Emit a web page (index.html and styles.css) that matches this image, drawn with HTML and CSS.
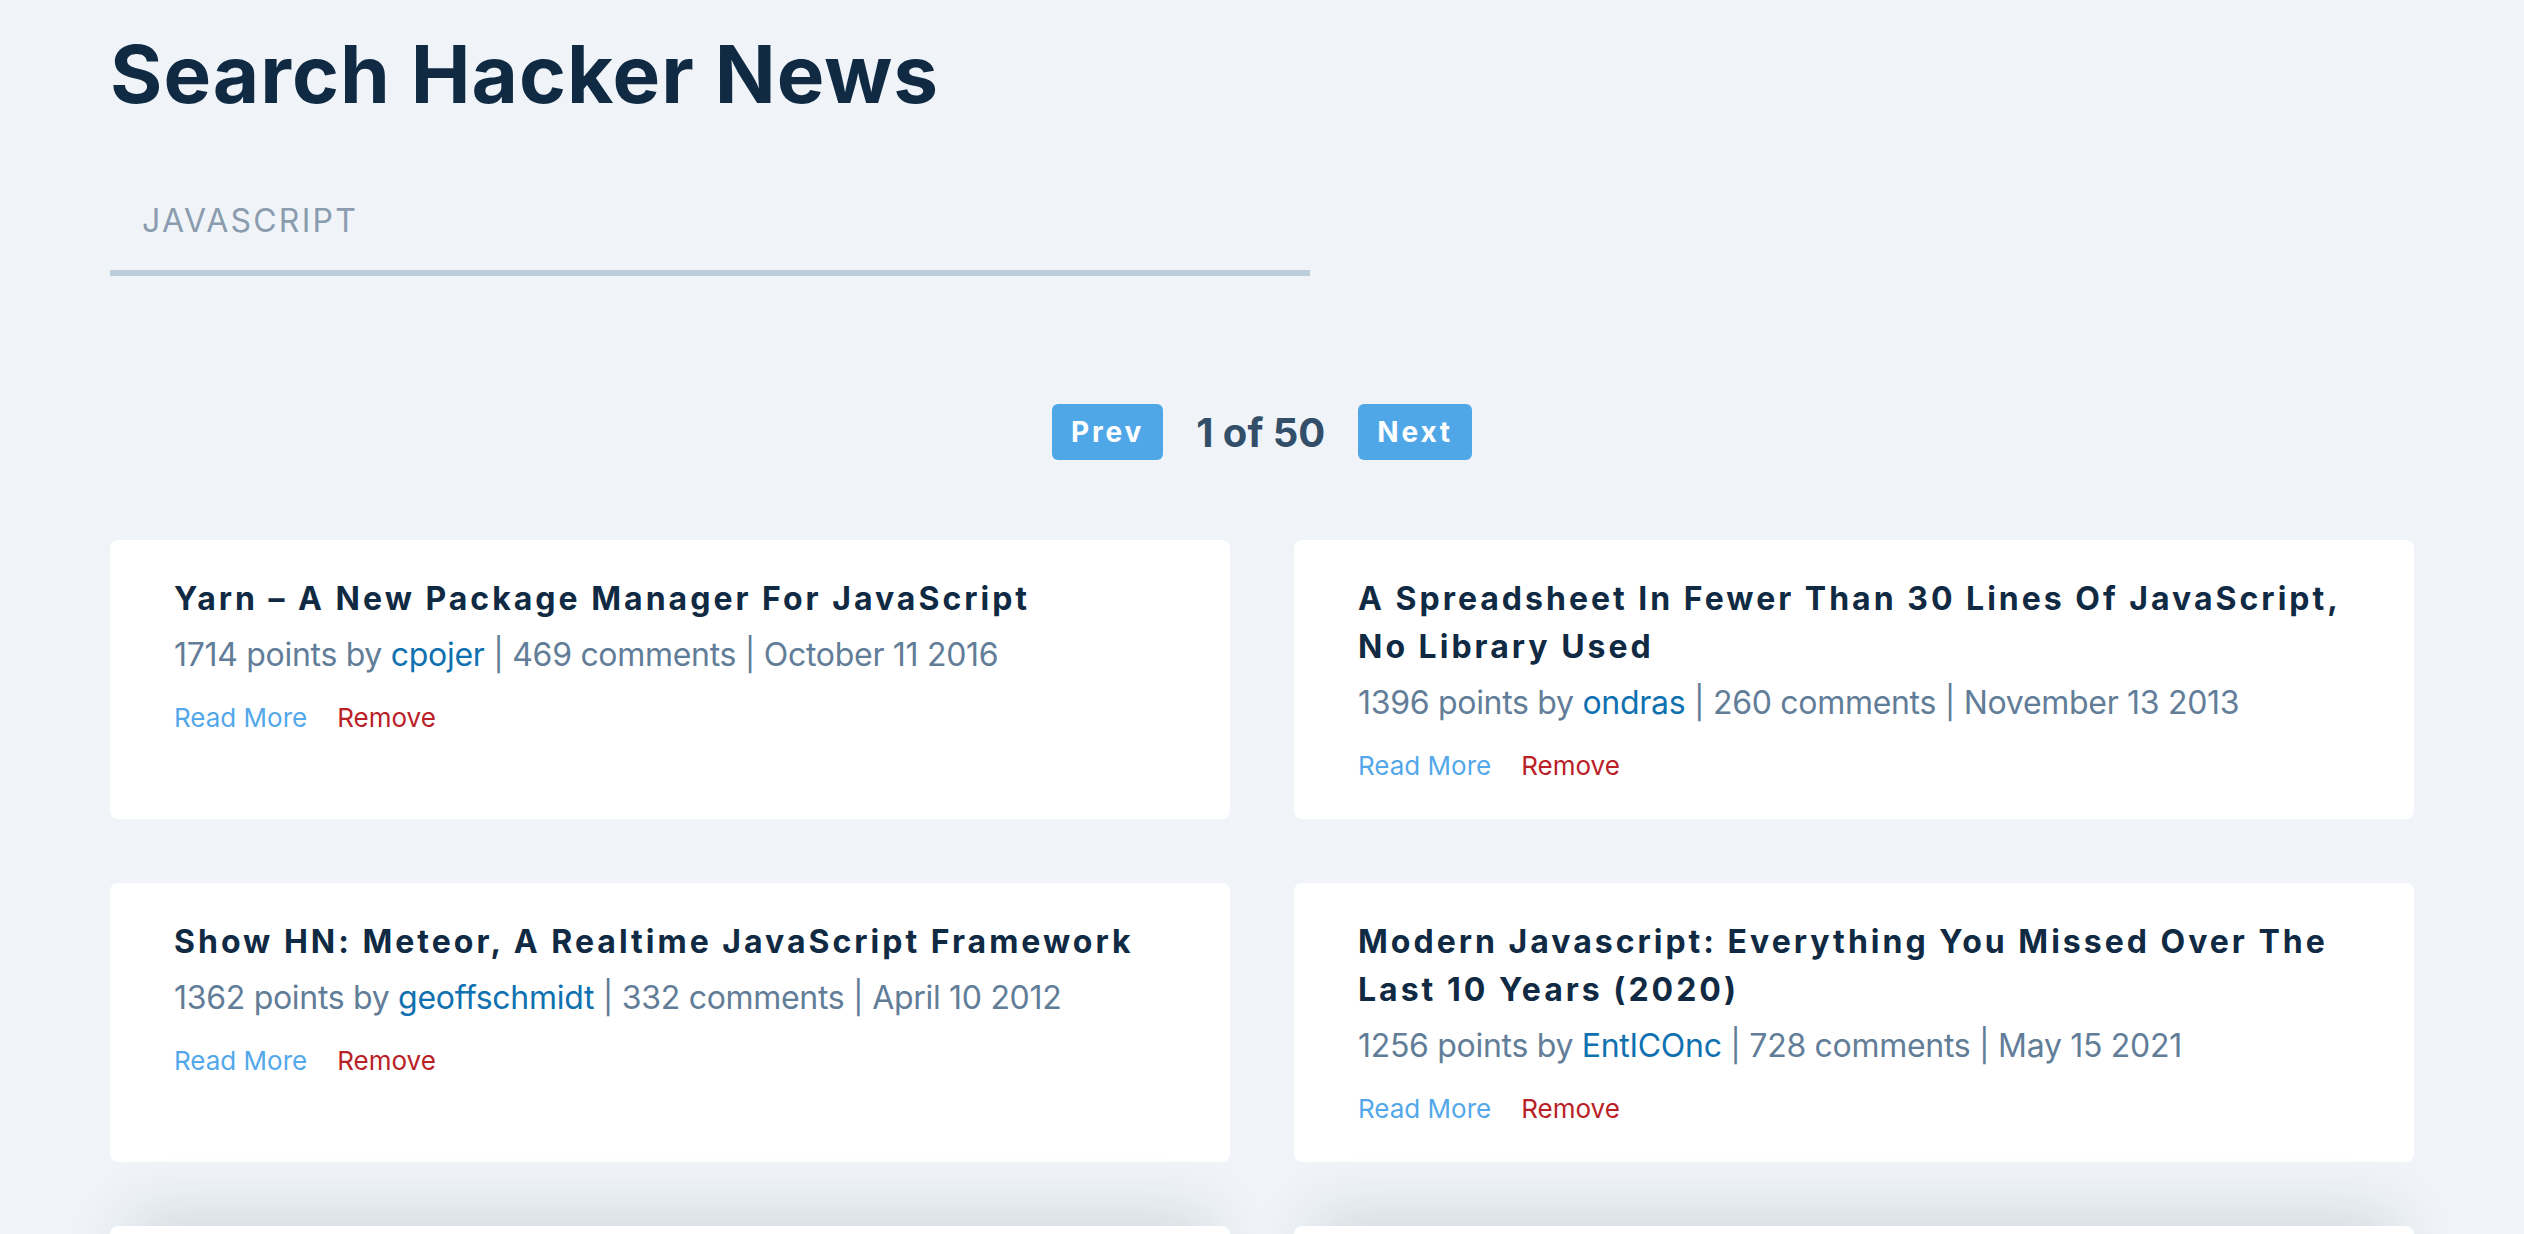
FILE: index.html
```html
<!DOCTYPE html>
<html lang="en">
<head>
<meta charset="utf-8">
<title>Search Hacker News</title>
<link rel="stylesheet" href="styles.css">
</head>
<body>
<main class="container">
  <h1 class="title">Search Hacker News</h1>
  <form class="search-form">
    <input class="search-input" type="text" value="javascript">
  </form>
  <div class="pager">
    <button class="pager-btn" type="button">Prev</button>
    <span class="pager-count">1 of 50</span>
    <button class="pager-btn" type="button">Next</button>
  </div>
  <section class="stories">
    <article class="story">
      <h2 class="story-title">Yarn – A New Package Manager For JavaScript</h2>
      <p class="story-meta">1714 points by <a class="author" href="#">cpojer</a> | 469 comments | October 11 2016</p>
      <div class="story-actions"><a class="read-more" href="#">Read More</a><a class="remove" href="#">Remove</a></div>
    </article>
    <article class="story">
      <h2 class="story-title">A Spreadsheet In Fewer Than 30 Lines Of JavaScript, No Library Used</h2>
      <p class="story-meta">1396 points by <a class="author" href="#">ondras</a> | 260 comments | November 13 2013</p>
      <div class="story-actions"><a class="read-more" href="#">Read More</a><a class="remove" href="#">Remove</a></div>
    </article>
    <article class="story">
      <h2 class="story-title">Show HN: Meteor, A Realtime JavaScript Framework</h2>
      <p class="story-meta">1362 points by <a class="author" href="#">geoffschmidt</a> | 332 comments | April 10 2012</p>
      <div class="story-actions"><a class="read-more" href="#">Read More</a><a class="remove" href="#">Remove</a></div>
    </article>
    <article class="story">
      <h2 class="story-title">Modern Javascript: Everything You Missed Over The Last 10 Years (2020)</h2>
      <p class="story-meta">1256 points by <a class="author" href="#">EntICOnc</a> | 728 comments | May 15 2021</p>
      <div class="story-actions"><a class="read-more" href="#">Read More</a><a class="remove" href="#">Remove</a></div>
    </article>
    <article class="story story-raised">
      <h2 class="story-title">Show HN: JavaScript Frameworks Compared</h2>
      <p class="story-meta">1120 points by <a class="author" href="#">someone</a> | 410 comments | March 2 2015</p>
      <div class="story-actions"><a class="read-more" href="#">Read More</a><a class="remove" href="#">Remove</a></div>
    </article>
    <article class="story story-raised">
      <h2 class="story-title">JavaScript: The Good Parts</h2>
      <p class="story-meta">1098 points by <a class="author" href="#">someone</a> | 388 comments | June 8 2014</p>
      <div class="story-actions"><a class="read-more" href="#">Read More</a><a class="remove" href="#">Remove</a></div>
    </article>
  </section>
</main>
</body>
</html>
```

FILE: styles.css
```css
* { box-sizing: border-box; }

html, body {
  margin: 0;
  padding: 0;
}

body {
  background: #f0f4f8;
  font-family: Inter, "Noto Sans", "Liberation Sans", sans-serif;
  color: #102a43;
}

.container {
  width: 2304px;
  margin: 0 auto;
  padding-bottom: 80px;
}

.title {
  margin: 26px 0 0;
  font-size: 80px;
  line-height: 96px;
  font-weight: 700;
  letter-spacing: 1px;
  color: #102a43;
}

.search-form {
  margin: 49px 0 0;
}

.search-input {
  display: block;
  width: 1200px;
  height: 105px;
  padding: 0 32px;
  border: none;
  border-bottom: 6px solid #bccddc;
  background: transparent;
  font-family: inherit;
  font-size: 32px;
  letter-spacing: 0.07em;
  text-transform: uppercase;
  color: #8a9cae;
  outline: none;
}

.pager {
  display: flex;
  justify-content: center;
  align-items: center;
  gap: 33px;
  margin: 128px 0 80px;
}

.pager-btn {
  height: 56px;
  padding: 0 19px;
  border: none;
  border-radius: 6px;
  background: #50a7e7;
  color: #ffffff;
  font-family: inherit;
  font-size: 28px;
  font-weight: 700;
  letter-spacing: 0.1em;
}

.pager-count {
  font-size: 40px;
  font-weight: 700;
  color: #334e68;
}

.stories {
  display: grid;
  grid-template-columns: 1fr 1fr;
  gap: 64px;
}

.story {
  background: #ffffff;
  border-radius: 8px;
  padding: 35px 64px 35px;
}

.story-raised {
  box-shadow: 0 -30px 60px -20px rgba(16, 42, 67, 0.14);
}

.story-title {
  margin: 0;
  font-size: 32px;
  line-height: 48px;
  font-weight: 700;
  letter-spacing: 0.094em;
  color: #102a43;
}

.story-meta {
  margin: 8px 0 0;
  font-size: 32px;
  line-height: 48px;
  letter-spacing: -0.3px;
  color: #627d98;
}

.author {
  color: #0f71b0;
  text-decoration: none;
}

.story-actions {
  display: flex;
  gap: 30px;
  margin-top: 21px;
  font-size: 26px;
  line-height: 36px;
}

.read-more {
  color: #53a8ea;
  text-decoration: none;
}

.remove {
  color: #ba2127;
  text-decoration: none;
}
```
